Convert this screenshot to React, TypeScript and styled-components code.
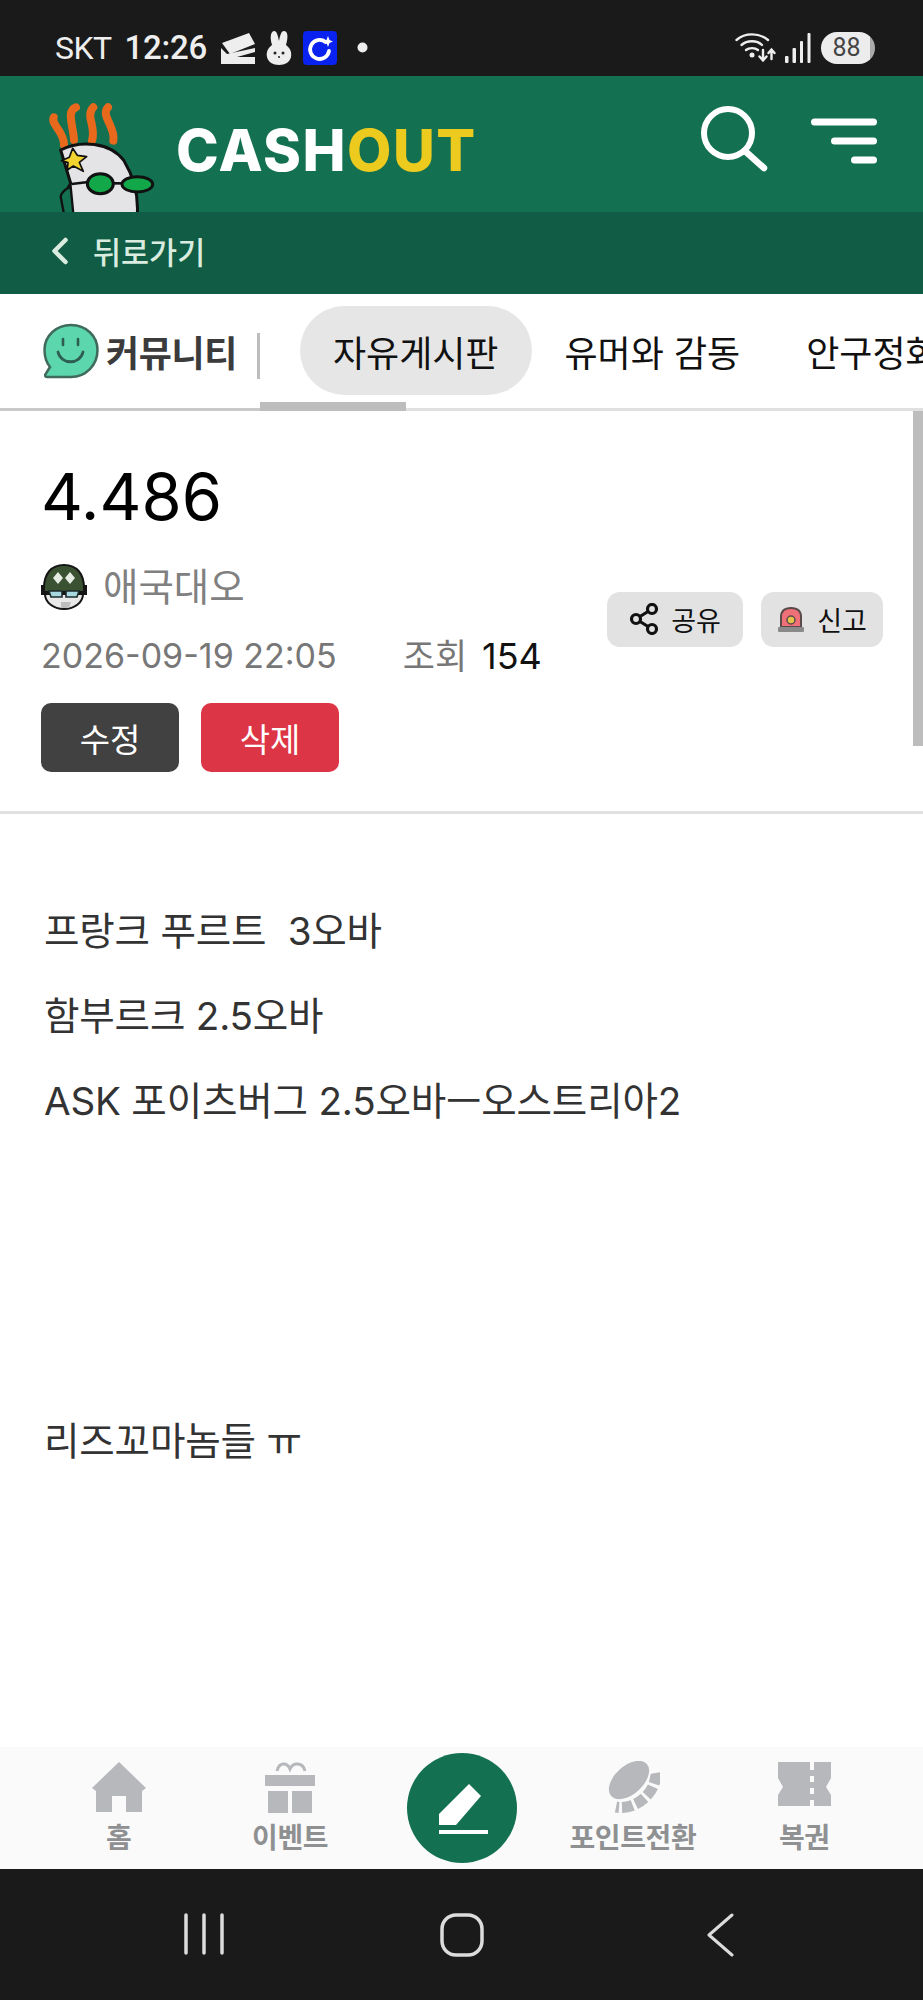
import React from "react";
import styled, { createGlobalStyle } from "styled-components";

const sans = `Inter, "Noto Sans CJK KR", sans-serif`;

const Global = createGlobalStyle`
  html, body { margin: 0; padding: 0; background: #fff; }
  * { box-sizing: border-box; }
`;

const Page = styled.div`
  position: relative;
  width: 923px;
  height: 2000px;
  display: flex;
  flex-direction: column;
  overflow: hidden;
  font-family: ${sans};
  background: #fff;
`;

const Icon = styled.svg<{ $gap?: number }>`
  display: block;
  flex: none;
  margin-right: ${(p) => p.$gap ?? 0}px;
`;

const StatusBar = styled.div`
  height: 76px;
  flex: none;
  background: #1a1a1a;
  color: #eeeeee;
  display: flex;
  align-items: center;
  justify-content: space-between;
  padding: 19px 48px 0 55px;
`;
const StatusGroup = styled.div`
  display: flex;
  align-items: center;
`;
const Carrier = styled.span`
  font: 400 32px Roboto, sans-serif;
  margin-right: 13px;
  letter-spacing: -0.6px;
`;
const Clock = styled.span`
  font: 500 33px Roboto, sans-serif;
  margin-right: 14px;
  letter-spacing: -0.2px;
`;
const Battery = styled.div`
  width: 54px;
  height: 32px;
  border-radius: 16px;
  background: linear-gradient(90deg, #ececec 0 90%, #a9a9a9 90%);
  color: #444;
  font: 400 25px Roboto, sans-serif;
  display: flex;
  align-items: center;
  justify-content: center;
  padding-right: 3px;
`;

const Header = styled.header`
  height: 136px;
  flex: none;
  background: #137152;
  display: flex;
  align-items: flex-start;
  padding: 14px 46px 0 30px;
  overflow: hidden;
`;
const Brand = styled.div`
  font: 800 57.5px Inter, sans-serif;
  letter-spacing: 1.5px;
  color: #fff;
  line-height: 70px;
  margin: 25px 0 0 6px;
`;
const BrandAccent = styled.span`
  color: #ecca1e;
`;
const HeaderActions = styled.div`
  margin-left: auto;
  display: flex;
  align-items: flex-start;
  gap: 43px;
  padding-top: 15px;
`;
const MenuIcon = styled(Icon)`
  margin-top: 12px;
`;

const SubBar = styled.div`
  height: 82px;
  flex: none;
  background: #115c44;
  display: flex;
  align-items: center;
  padding: 0 0 4px 50px;
  gap: 23px;
  color: #d9ecdf;
  font-size: 30.5px;
  font-weight: 500;
`;

const CategoryNav = styled.nav`
  position: relative;
  height: 117px;
  flex: none;
  display: flex;
  align-items: flex-start;
  overflow: hidden;
  &::after {
    content: "";
    position: absolute;
    left: 0;
    right: 0;
    bottom: 0;
    height: 3px;
    background: linear-gradient(90deg, #c9c9c9 0 260px, #e0e0e0 260px);
  }
`;
const CategoryTitle = styled.div`
  display: flex;
  align-items: center;
  flex: none;
  height: 113px;
  padding-left: 43px;
  font-size: 36px;
  font-weight: 700;
  color: #3b3b3b;
  letter-spacing: -0.4px;
  gap: 7px;
`;
const Divider = styled.span`
  flex: none;
  width: 3px;
  height: 46px;
  background: #bdbdbd;
  margin: 39px 0 0 20px;
`;
const Tabs = styled.div`
  display: flex;
  flex: none;
  margin: 12px 0 0 40px;
`;
const Tab = styled.div<{ $active?: boolean }>`
  height: 89px;
  display: flex;
  align-items: center;
  flex: none;
  padding: 0 33px;
  border-radius: 45px;
  font-size: 36px;
  color: #111;
  white-space: pre;
  background: ${(p) => (p.$active ? "#e6e6e6" : "transparent")};
`;
const ScrollThumb = styled.span`
  position: absolute;
  z-index: 1;
  left: 260px;
  bottom: 0;
  width: 146px;
  height: 9px;
  background: #bdbdbd;
`;

const PostHead = styled.section`
  position: relative;
  height: 403px;
  flex: none;
  display: flex;
  align-items: center;
  justify-content: space-between;
  padding: 10px 40px 0 41px;
  border-bottom: 3px solid #e0e0e0;
`;
const Meta = styled.div`
  display: flex;
  flex-direction: column;
  align-items: flex-start;
`;
const Title = styled.h1`
  margin: 0;
  font: 400 65px/74px ${sans};
  color: #000;
`;
const Author = styled.div`
  display: flex;
  align-items: center;
  gap: 16px;
  margin-top: 26px;
  font-size: 38.5px;
  line-height: 54px;
  color: #808080;
`;
const DateRow = styled.div`
  display: flex;
  align-items: center;
  margin-top: 20px;
  font-size: 34px;
  line-height: 44px;
  color: #777;
`;
const Views = styled.span`
  margin-left: 66px;
  font-size: 35px;
`;
const ViewCount = styled.span`
  margin-left: 15px;
  color: #111;
  font-size: 36px;
`;
const ManageRow = styled.div`
  display: flex;
  gap: 22px;
  margin-top: 25px;
`;
const ManageButton = styled.button<{ $danger?: boolean }>`
  width: 138px;
  height: 69px;
  border: 0;
  border-radius: 10px;
  color: #fff;
  font: 400 33px ${sans};
  background: ${(p) => (p.$danger ? "#dc3545" : "#414141")};
`;
const Actions = styled.div`
  display: flex;
  gap: 18px;
  margin-top: 6px;
`;
const ActionButton = styled.button<{ $w: number }>`
  width: ${(p) => p.$w}px;
  height: 55px;
  border: 0;
  border-radius: 13px;
  background: #e2e2e2;
  color: #111;
  font: 400 27px ${sans};
  display: flex;
  align-items: center;
  justify-content: center;
  gap: 12px;
`;
const PageScroll = styled.span`
  position: absolute;
  right: 0;
  top: 0;
  width: 10px;
  height: 335px;
  background: #bdbdbd;
`;

const Article = styled.article`
  flex: 1;
  padding: 75px 44px 0;
  color: #333;
  font-size: 38.6px;
  line-height: 85px;
  letter-spacing: -0.2px;
`;
const Para = styled.p`
  margin: 0;
  white-space: pre;
  min-height: 85px;
`;

const BottomNav = styled.nav`
  height: 122px;
  flex: none;
  background: #fafafa;
  display: grid;
  grid-template-columns: repeat(5, 1fr);
  padding: 0 33px;
`;
const NavItem = styled.div`
  display: flex;
  flex-direction: column;
  align-items: center;
  justify-content: flex-start;
  padding-top: 14px;
  color: #8f9092;
  font-size: 28px;
  font-weight: 600;
  letter-spacing: -0.4px;
  white-space: nowrap;
`;
const NavLabel = styled.span`
  line-height: 40px;
  margin-top: 5px;
`;
const WriteCell = styled.div`
  display: flex;
  justify-content: center;
  padding: 6px 0 0 1px;
`;
const WriteButton = styled.div`
  width: 110px;
  height: 110px;
  border-radius: 50%;
  background: #137152;
  display: flex;
  align-items: center;
  justify-content: center;
`;

const SystemBar = styled.div`
  height: 131px;
  flex: none;
  background: #1a1a1a;
  display: grid;
  grid-template-columns: repeat(3, 258px);
  justify-content: center;
  padding-top: 44px;
`;
const SystemCell = styled.div`
  display: flex;
  justify-content: center;
  align-items: flex-start;
`;

const Mascot = () => (
  <Icon width="140" height="122" viewBox="0 0 420 366">
    <g fill="none" stroke="#e8691c" strokeWidth="24" strokeLinecap="round">
      <path d="M71 82 C62 105 104 125 102 165" />
      <path d="M138 52 C108 62 130 108 132 150" />
      <path d="M190 52 C165 78 200 112 186 152" />
      <path d="M234 52 C210 76 258 112 250 152" />
    </g>
    <path d="M92 180 C150 150 240 155 282 212 C312 262 325 320 322 372 L106 372 C90 340 108 300 122 280 Z" fill="#e4e4e6" stroke="#111" strokeWidth="9" />
    <path d="M92 320 C96 300 112 296 122 290 L130 372 L102 372 Z" fill="#137152" stroke="#111" strokeWidth="7" />
    <path d="M128 175 L142 196 L170 200 L148 217 L160 244 L130 228 L112 240 L114 218 L94 212 L118 202 Z" fill="#f2d330" stroke="#111" strokeWidth="5" strokeLinejoin="round" />
    <path d="M125 282 L175 276" stroke="#111" strokeWidth="8" />
    <ellipse cx="211" cy="281" rx="39" ry="30" fill="#12a84a" stroke="#111" strokeWidth="9" />
    <path d="M248 280 L276 280" stroke="#111" strokeWidth="8" />
    <ellipse cx="322" cy="283" rx="46" ry="23" fill="#12a84a" stroke="#111" strokeWidth="9" />
  </Icon>
);

const SmileIcon = () => (
  <Icon width="56" height="56" viewBox="0 0 56 56">
    <path d="M28 2 C43 2 54.500 13 54.500 27 C54.500 42 43 54 28 54 L4 54 C2 54 1.500 52 3 50.500 L7 44 C3 39 1.500 33 1.500 27 C1.500 13 13 2 28 2 Z" fill="#5cd6ac" stroke="#3f6a5e" strokeWidth="2.500" />
    <path d="M20 16 V22 M35 16 V22" stroke="#2e5d52" strokeWidth="2.600" strokeLinecap="round" />
    <path d="M15 29 C18 42 37 42 40 29" fill="none" stroke="#2e5d52" strokeWidth="2.800" strokeLinecap="round" />
  </Icon>
);

const Avatar = () => (
  <Icon width="46" height="46" viewBox="0 0 46 46">
    <path d="M4 30 C4 38 12 45 23 45 C34 45 42 38 42 30 Z" fill="#e8e8e8" stroke="#151515" strokeWidth="2" />
    <path d="M3 24 C3 10 10 1 23 1 C36 1 43 10 43 24 L43 28 L3 28 Z" fill="#3a5232" stroke="#151515" strokeWidth="2" />
    <path d="M17 8 L22 14 L17 20 L12 14 Z M29 8 L34 14 L29 20 L24 14 Z" fill="#e6ece2" />
    <rect x="0" y="21" width="4" height="10" fill="#151515" />
    <rect x="42" y="21" width="4" height="10" fill="#151515" />
    <path d="M8 27 H21 V33 H10 Z M25 27 H38 L36 33 H25 Z" fill="#a8d8e0" stroke="#1d2b2c" strokeWidth="1.600" />
    <path d="M20 38 L30 38 L28 44 L20 44 Z" fill="#bdbdbd" />
  </Icon>
);

const App = () => (
  <Page>
    <Global />
    <StatusBar>
      <StatusGroup>
        <Carrier>SKT</Carrier>
        <Clock>12:26</Clock>
        <Icon width="35" height="32" viewBox="0 0 35 32" $gap={10}>
          <path d="M1 11 L28 1 L34 12 L9 22 Z" fill="#eee" />
          <path d="M0 16 L6 22 L34 16 V20 L16 25 H34 V32 H0 Z" fill="#eee" />
        </Icon>
        <Icon width="26" height="34" viewBox="0 0 26 34" $gap={11}>
          <path d="M6 14 C3 4 6 0 8 0 C11 0 12 5 13 10 C14 5 15 0 18 0 C21 0 23 4 20 14 C24 17 26 21 25 26 C24 31 19 34 13 34 C7 34 2 31 1 26 C0 21 2 17 6 14 Z" fill="#eee" />
          <circle cx="9" cy="22" r="1.500" fill="#222" />
          <circle cx="17" cy="22" r="1.500" fill="#222" />
          <circle cx="13" cy="26" r="1" fill="#222" />
        </Icon>
        <Icon width="34" height="34" viewBox="0 0 34 34" $gap={20}>
          <rect width="34" height="34" rx="4" fill="#0a22f0" />
          <path d="M22.500 11 A9.500 9.500 0 1 0 26 20" fill="none" stroke="#fff" strokeWidth="3.800" strokeLinecap="round" />
          <path d="M25 5 L26.500 9 L30 10.500 L26.500 12 L25 16 L23.500 12 L20 10.500 L23.500 9 Z" fill="#fff" />
        </Icon>
        <Icon width="11" height="11" viewBox="0 0 11 11">
          <circle cx="5.500" cy="5.500" r="5" fill="#eee" />
        </Icon>
      </StatusGroup>
      <StatusGroup>
        <Icon width="41" height="30" viewBox="0 0 41 30" $gap={9}>
          <g fill="none" stroke="#eee" strokeWidth="2.400" strokeLinecap="round">
            <path d="M1.500 7 C10 -0.500 24 -0.500 33 7" />
            <path d="M6.500 12 C12 7 22 7 27 12" />
            <path d="M11 17 C14 14.500 20 14.500 23 17" />
            <path d="M28 17 V27 M24.500 23.500 L28 27.500 L31.500 23.500" />
            <path d="M36.500 26 V17 M33.500 20 L36.500 16.500 L39.500 20" />
          </g>
          <circle cx="17" cy="22" r="2.500" fill="#eee" />
        </Icon>
        <Icon width="26" height="30" viewBox="0 0 26 30" $gap={10}>
          <g fill="#eee">
            <rect x="0" y="23" width="3.500" height="7" rx="1" />
            <rect x="7.500" y="15" width="3.500" height="15" rx="1" />
            <rect x="15" y="8" width="3" height="22" rx="1" />
            <rect x="22.500" y="0" width="3" height="30" rx="1" />
          </g>
        </Icon>
        <Battery>88</Battery>
      </StatusGroup>
    </StatusBar>

    <Header>
      <Mascot />
      <Brand>
        CASH<BrandAccent>OUT</BrandAccent>
      </Brand>
      <HeaderActions>
        <Icon width="68" height="68" viewBox="0 0 68 68">
          <circle cx="28" cy="28" r="24" fill="none" stroke="#fff" strokeWidth="6" />
          <path d="M45 46 L64 63" stroke="#fff" strokeWidth="6.500" strokeLinecap="round" />
        </Icon>
        <MenuIcon width="66" height="54" viewBox="0 0 66 54">
          <g stroke="#fff" strokeWidth="7" strokeLinecap="round">
            <path d="M3.500 5 H62.500" />
            <path d="M23.500 24 H62.500" />
            <path d="M43.500 43 H62.500" />
          </g>
        </MenuIcon>
      </HeaderActions>
    </Header>

    <SubBar>
      <Icon width="20" height="28" viewBox="0 0 20 28">
        <path d="M15.500 3 L4.500 14 L15.500 25" fill="none" stroke="#d9ecdf" strokeWidth="4.500" strokeLinecap="round" strokeLinejoin="round" />
      </Icon>
      뒤로가기
    </SubBar>

    <CategoryNav>
      <CategoryTitle>
        <SmileIcon />
        커뮤니티
      </CategoryTitle>
      <Divider />
      <Tabs>
        <Tab $active>자유게시판</Tab>
        <Tab>유머와 감동</Tab>
        <Tab>안구정화</Tab>
      </Tabs>
      <ScrollThumb />
    </CategoryNav>

    <PostHead>
      <Meta>
        <Title>4.486</Title>
        <Author>
          <Avatar />
          애국대오
        </Author>
        <DateRow>
          2026-09-19 22:05
          <Views>조회</Views>
          <ViewCount>154</ViewCount>
        </DateRow>
        <ManageRow>
          <ManageButton>수정</ManageButton>
          <ManageButton $danger>삭제</ManageButton>
        </ManageRow>
      </Meta>
      <Actions>
        <ActionButton $w={136}>
          <Icon width="30" height="32" viewBox="0 0 30 32">
            <g fill="none" stroke="#111" strokeWidth="3.200">
              <circle cx="23" cy="6" r="4.500" />
              <circle cx="7" cy="16" r="4.500" />
              <circle cx="23" cy="26" r="4.500" />
              <path d="M11 13.500 L19 8.500 M11 18.500 L19 23.500" />
            </g>
          </Icon>
          공유
        </ActionButton>
        <ActionButton $w={122}>
          <Icon width="28" height="28" viewBox="0 0 28 28">
            <path d="M4 22 V12 C4 6 8 3 14 3 C20 3 24 6 24 12 V22 Z" fill="#f0707a" stroke="#5b4a4a" strokeWidth="2" />
            <rect x="1" y="22" width="26" height="5" rx="1" fill="#8a8a8a" />
            <circle cx="14" cy="15" r="4" fill="#e7c14a" stroke="#5b4a4a" strokeWidth="1.500" />
          </Icon>
          신고
        </ActionButton>
      </Actions>
      <PageScroll />
    </PostHead>

    <Article>
      <Para>프랑크 푸르트  3오바</Para>
      <Para>함부르크 2.5오바</Para>
      <Para>ASK 포이츠버그 2.5오바ㅡ오스트리아2</Para>
      <Para />
      <Para />
      <Para />
      <Para>리즈꼬마놈들 ㅠ</Para>
    </Article>

    <BottomNav>
      <NavItem>
        <Icon width="56" height="52" viewBox="0 0 56 52" fill="#b6b8bb">
          <path d="M28 1 L55 27 L51 30 V51 H35 V35 H21 V51 H5 V30 L1 27 Z" />
        </Icon>
        <NavLabel>홈</NavLabel>
      </NavItem>
      <NavItem>
        <Icon width="50" height="52" viewBox="0 0 50 52" fill="#b6b8bb">
          <path d="M12 10 C14 1 22 1 25 8 C28 1 38 1 40 10" fill="none" stroke="#b6b8bb" strokeWidth="3" />
          <rect x="0" y="14" width="50" height="11" />
          <rect x="3" y="30" width="20" height="22" />
          <rect x="27" y="30" width="20" height="22" />
        </Icon>
        <NavLabel>이벤트</NavLabel>
      </NavItem>
      <WriteCell>
        <WriteButton>
          <Icon width="66" height="66" viewBox="0 0 66 66" fill="#fff">
            <path d="M40 9 L52 21 L27 50 H10 V39 Z" />
            <rect x="10" y="55" width="49" height="4" />
          </Icon>
        </WriteButton>
      </WriteCell>
      <NavItem>
        <Icon width="54" height="52" viewBox="0 0 54 52">
          <path d="M49 12 C52 30 30 50 10 46" fill="none" stroke="#b6b8bb" strokeWidth="11" strokeDasharray="11 3" />
          <ellipse cx="23" cy="19" rx="25" ry="15" transform="rotate(-42 23 19)" fill="#b6b8bb" stroke="#fafafa" strokeWidth="2" />
        </Icon>
        <NavLabel>포인트전환</NavLabel>
      </NavItem>
      <NavItem>
        <Icon width="53" height="52" viewBox="0 0 53 52" fill="#b6b8bb">
          <path d="M0 1 H32 V9 H36 V1 H53 V17 L48 26 L53 34 V45 H36 V39 H32 V45 H0 V34 L5 26 L0 17 Z M32 15 V21 H36 V15 Z M32 27 V33 H36 V27 Z" fillRule="evenodd" />
        </Icon>
        <NavLabel>복권</NavLabel>
      </NavItem>
    </BottomNav>

    <SystemBar>
      <SystemCell>
        <Icon width="42" height="42" viewBox="0 0 42 42">
          <g stroke="#dcdcdc" strokeWidth="3.500" strokeLinecap="round">
            <path d="M3 2 V40 M21 2 V40 M39 2 V40" />
          </g>
        </Icon>
      </SystemCell>
      <SystemCell>
        <Icon width="44" height="44" viewBox="0 0 44 44">
          <rect x="2" y="2" width="40" height="40" rx="14" fill="none" stroke="#dcdcdc" strokeWidth="3.500" />
        </Icon>
      </SystemCell>
      <SystemCell>
        <Icon width="28" height="44" viewBox="0 0 28 44">
          <path d="M26 2 L3 22 L26 42" fill="none" stroke="#dcdcdc" strokeWidth="3" strokeLinecap="round" strokeLinejoin="round" />
        </Icon>
      </SystemCell>
    </SystemBar>
  </Page>
);

export default App;
